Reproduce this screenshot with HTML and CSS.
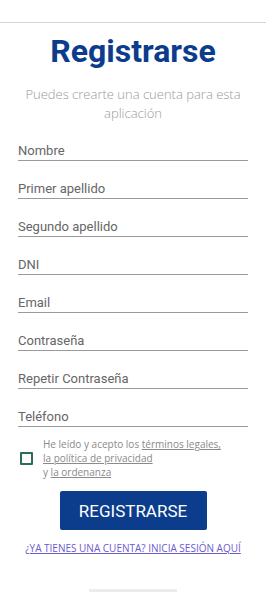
FILE: index.html
```html
<!DOCTYPE html>
<html lang="es">
<head>
  <meta charset="UTF-8">
  <meta name="viewport" content="width=device-width, initial-scale=1.0">
  <title>Registrarse</title>
  <link rel="stylesheet" href="styles.css">
</head>
<body>
  <div class="screen">
    <div class="top-bar"></div>

    <!-- Header -->
    <div class="header">
      <h1>Registrarse</h1>
      <p class="subtitle">Puedes crearte una cuenta para esta aplicación</p>
    </div>

    <!-- Fields -->
    <div class="fields">
      <div class="field"><span>Nombre</span></div>
      <div class="field"><span>Primer apellido</span></div>
      <div class="field"><span>Segundo apellido</span></div>
      <div class="field"><span>DNI</span></div>
      <div class="field"><span>Email</span></div>
      <div class="field"><span>Contraseña</span></div>
      <div class="field"><span>Repetir Contraseña</span></div>
      <div class="field"><span>Teléfono</span></div>
    </div>

    <!-- Terms -->
    <div class="terms">
      <div class="checkbox"></div>
      <p>He leído y acepto los <a href="#">términos legales,</a><br>
        <a href="#">la política de privacidad</a><br>
        y <a href="#">la ordenanza</a></p>
    </div>

    <button class="btn-primary">REGISTRARSE</button>

    <a href="#" class="login-link">¿YA TIENES UNA CUENTA? INICIA SESIÓN AQUÍ</a>

    <div class="home-bar"></div>
  </div>
</body>
</html>
```

FILE: styles.css
```css
* {
  margin: 0;
  padding: 0;
  box-sizing: border-box;
}

body {
  font-family: Roboto, sans-serif;
  width: 266px;
  height: 592px;
  background: white;
  overflow: hidden;
}

.screen {
  display: flex;
  flex-direction: column;
  height: 592px;
}

.top-bar {
  height: 23px;
  border-bottom: 1px solid #d6d6d6;
}

.header {
  text-align: center;
  padding-top: 10px;
}

.header h1 {
  font-size: 32px;
  font-weight: 700;
  color: #0b3d8c;
  line-height: 36px;
}

.subtitle {
  font-family: "Open Sans", sans-serif;
  font-weight: 300;
  font-size: 13px;
  line-height: 19px;
  color: #9a9a9a;
  margin: 16px 20px 0;
}

.fields {
  display: flex;
  flex-direction: column;
  gap: 14px;
  padding: 0 18px;
  margin-top: 14px;
}

.field {
  height: 24px;
  border-bottom: 1px solid #9a9a9a;
  display: flex;
  align-items: flex-end;
  padding-bottom: 1px;
}

.field span {
  font-size: 13px;
  line-height: 17px;
  color: #666;
}

.terms {
  display: flex;
  align-items: center;
  gap: 10px;
  padding: 0 20px;
  margin-top: 10px;
}

.checkbox {
  width: 13px;
  height: 13px;
  border: 2px solid #2e6b58;
  border-radius: 1px;
  flex-shrink: 0;
}

.terms p {
  font-family: "Open Sans", sans-serif;
  font-size: 10px;
  line-height: 14px;
  color: #8a8a8a;
}

.terms a {
  color: #8a8a8a;
}

.btn-primary {
  align-self: center;
  margin-top: 12px;
  width: 147px;
  height: 39px;
  background: #0b3d8c;
  color: white;
  border: none;
  border-radius: 2px;
  font-family: Roboto, sans-serif;
  font-size: 17px;
  font-weight: 400;
}

.login-link {
  align-self: center;
  margin-top: 11px;
  font-family: "Open Sans", sans-serif;
  font-size: 10px;
  color: #6a5ad0;
}

.home-bar {
  margin-top: auto;
  align-self: center;
  width: 88px;
  height: 3px;
  background: #ececec;
}
```
